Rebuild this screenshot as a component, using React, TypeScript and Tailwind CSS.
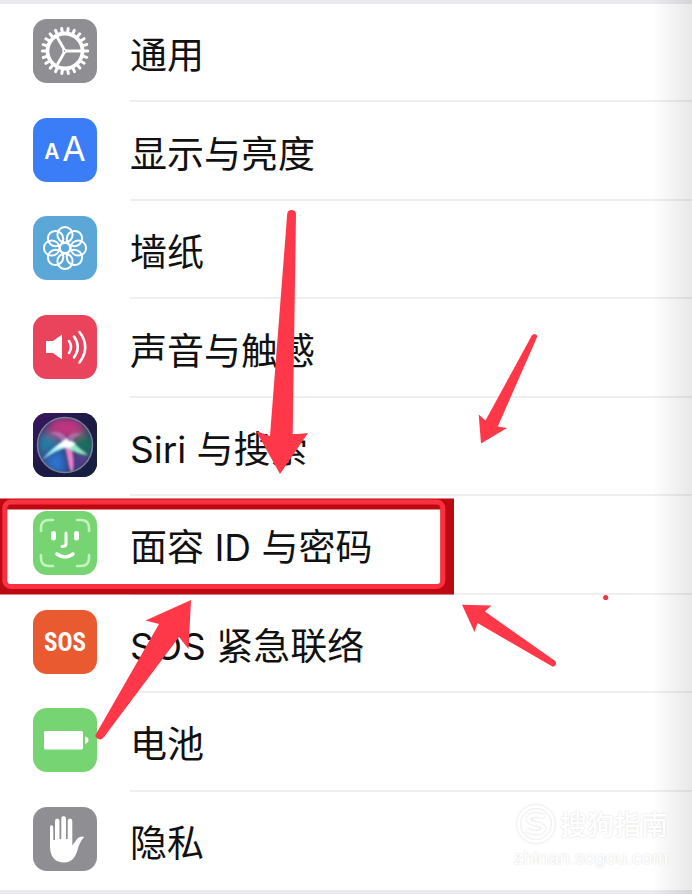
import type { ReactNode } from "react";

function Tile({ className, children }: { className: string; children: ReactNode }) {
  return (
    <span className={`block size-16 shrink-0 overflow-hidden rounded-[14px] ${className}`}>
      <svg viewBox="0 0 64 64" className="size-full" fill="none" aria-hidden="true">
        {children}
      </svg>
    </span>
  );
}

const around = (count: number) => Array.from({ length: count }, (_, i) => (i * 360) / count);

function GearIcon() {
  return (
    <Tile className="bg-[#8e8e93]">
      <g stroke="#fff">
        {around(22).map((a) => (
          <path key={a} d="M32 14V9.3" strokeWidth="3" strokeLinecap="round" transform={`rotate(${a + 8} 32 32)`} />
        ))}
        <circle cx="32" cy="32" r="17.5" strokeWidth="3.8" />
        <path d="M33 32H49M31.5 31L23.5 17M31.5 33L23.5 47" strokeWidth="2.8" />
        <circle cx="31.5" cy="32" r="1.6" strokeWidth="1.5" />
      </g>
    </Tile>
  );
}

function DisplayIcon() {
  return (
    <Tile className="bg-[#3a7df6]">
      <g fill="#fff" textAnchor="middle" className="font-[Inter,sans-serif]">
        <text x="19" y="41" className="text-[21px] font-semibold">
          A
        </text>
        <text x="41" y="43" className="text-[34px]">
          A
        </text>
      </g>
    </Tile>
  );
}

function WallpaperIcon() {
  return (
    <Tile className="bg-[#5ba8d8]">
      <g stroke="#fff" strokeWidth="2">
        {around(8).map((a) => (
          <ellipse key={a} cx="32" cy="18.7" rx="7.6" ry="7.8" transform={`rotate(${a} 32 32)`} />
        ))}
        <circle cx="32" cy="32" r="5" strokeWidth="1.8" />
      </g>
    </Tile>
  );
}

function SoundIcon() {
  return (
    <Tile className="bg-[#e9445c]">
      <path d="M13 26H20L29 19.5V44.5L20 38H13Z" fill="#fff" />
      <g stroke="#fff" strokeWidth="2.6" strokeLinecap="round">
        <path d="M36 26Q40 32 36 38" />
        <path d="M41 21.5Q48.5 32 41 42.5" />
        <path d="M46.5 17Q58 32 46.5 47.5" />
      </g>
    </Tile>
  );
}

function SiriIcon() {
  return (
    <Tile className="bg-[#1c1b3a]">
      <defs>
        <linearGradient id="siri-bg" x1="0" y1="0" x2="1" y2="1">
          <stop offset="0" stopColor="#3a1560" />
          <stop offset="0.5" stopColor="#1c1b45" />
          <stop offset="1" stopColor="#14203f" />
        </linearGradient>
        <clipPath id="siri-orb">
          <circle cx="32" cy="32" r="27" />
        </clipPath>
        <filter id="siri-soft" x="-50%" y="-50%" width="200%" height="200%">
          <feGaussianBlur stdDeviation="4" />
        </filter>
        <filter id="siri-glow" x="-50%" y="-50%" width="200%" height="200%">
          <feGaussianBlur stdDeviation="0.9" />
        </filter>
      </defs>
      <rect width="64" height="64" fill="url(#siri-bg)" />
      <g clipPath="url(#siri-orb)">
        <circle cx="32" cy="32" r="27" fill="#34386c" />
        <g filter="url(#siri-soft)">
          <path d="M12 18L22 4L46 6L52 18L34 27Z" fill="#c0357f" />
          <path d="M36 29L52 17L64 34L54 44Z" fill="#13705f" />
          <path d="M4 24L14 20L30 30L6 44Z" fill="#287fa6" />
          <path d="M8 48L30 34L34 60L20 60Z" fill="#2a74cf" />
          <path d="M40 38L56 46L44 60Z" fill="#5d3b9a" />
        </g>
        <g filter="url(#siri-glow)">
          <path d="M17 20Q31 16 35 29L30 33Q29 23 17 20Z" fill="#d79ae0" opacity=".5" />
          <path d="M49 21Q35 17 33 29L39 31Q40 23 49 21Z" fill="#c79ae0" opacity=".45" />
          <path d="M9 47Q20 34 31 27L38 29L36 34Q22 37 9 47Z" fill="#a4f1f6" />
          <path d="M31 30L37 30Q42 44 40 60Q37 60 35 48T31 33Z" fill="#ef80c8" />
          <path d="M33 28L39 28Q47 36 55 42Q43 41 33 34Z" fill="#8fe9c6" />
          <path d="M22 35L31 28L33 25L36 28L43 30L37 35L28 34Z" fill="#fff" />
        </g>
      </g>
      <circle cx="32" cy="32" r="27.5" stroke="#8c96aa" strokeWidth="1.6" opacity=".8" />
    </Tile>
  );
}

function FaceIcon() {
  return (
    <Tile className="bg-[#76d572]">
      <g stroke="#fff" strokeLinecap="round">
        <path
          d="M8 20V17Q8 9 16 9H20M44 9H48Q56 9 56 17V20M56 44V47Q56 55 48 55H44M20 55H16Q8 55 8 47V44"
          stroke="#c5f3bd"
          strokeWidth="2.6"
        />
        <path d="M20.5 22.5V27M43.5 22.5V27" strokeWidth="5" />
        <path d="M33 22V32.5Q33 35.5 29 35.5" strokeWidth="3" />
        <path d="M24 43Q32 49 40 43" strokeWidth="3.6" />
      </g>
    </Tile>
  );
}

function SosIcon() {
  return (
    <Tile className="bg-[#ea5a31]">
      <text
        x="32"
        y="41"
        textAnchor="middle"
        fill="#fff"
        className="font-['Roboto_Condensed',Roboto,sans-serif] text-[25px] font-bold"
      >
        SOS
      </text>
    </Tile>
  );
}

function BatteryIcon() {
  return (
    <Tile className="bg-[#76d572]">
      <rect x="11" y="23" width="39" height="18.5" rx="1.5" fill="#fff" />
      <path d="M52 28.5Q55.5 29.5 55.5 32T52 36Z" fill="#fff" />
    </Tile>
  );
}

function HandIcon() {
  return (
    <Tile className="bg-[#8e8e93]">
      <path
        d="M17 20.5Q17 18 18.5 18T20.3 20.5V33H22V14Q22 11.5 24.3 11.5T26.5 14V32H28.3V11.5Q28.3 9 30.6 9T33 11.5V32H34.7V14Q34.7 11.5 37 11.5T39.3 14V38.5L44.5 31.5Q47.5 28.5 51.3 30Q48 33 45.3 40Q42 55.5 31.5 55.5Q17 55.5 17 39Z"
        fill="#fff"
      />
    </Tile>
  );
}

const items = [
  { label: "通用", icon: <GearIcon /> },
  { label: "显示与亮度", icon: <DisplayIcon /> },
  { label: "墙纸", icon: <WallpaperIcon /> },
  { label: "声音与触感", icon: <SoundIcon /> },
  { label: "Siri 与搜索", icon: <SiriIcon /> },
  { label: "面容 ID 与密码", icon: <FaceIcon /> },
  { label: "SOS 紧急联络", icon: <SosIcon /> },
  { label: "电池", icon: <BatteryIcon /> },
  { label: "隐私", icon: <HandIcon /> },
];

// Hand-drawn marks that float over the list
function Annotations() {
  return (
    <svg
      viewBox="0 0 692 894"
      className="pointer-events-none absolute top-0 left-0 h-[894px] w-[692px]"
      fill="none"
      aria-hidden="true"
    >
      <path d="M0 498.5H454V594.5H0ZM6 509.5V584H440.5V509.5Z" fill="#bd0912" fillRule="evenodd" />
      <rect x="4.8" y="502" width="438" height="84.5" rx="6" stroke="#fb3041" strokeWidth="5" />
      <g fill="#fe3848">
        <path d="M287.2 214Q287.5 210 291.5 210T296 214L292.7 434.5L308 433L280 474L256 431L270 436Z" />
        <path d="M531.8 335.5Q534 333 536 334.5T536.7 338L497.8 426.5L507 428L481 443.5L478.7 414.5L485.5 420.5Z" />
        <path d="M462 604.8L491.5 605.5L485 611.5L554.5 660.5Q557 662.5 555.5 665T551.5 666L477.5 623L474.5 632Z" />
        <path d="M96 734L159 624L145.5 620.5L191 600L188.5 649L179 637L104 737Q101 741 97.5 738.5T96 734Z" />
      </g>
      <circle cx="605.7" cy="597.5" r="2.6" fill="#e8394a" />
    </svg>
  );
}

function Watermark() {
  return (
    <div className="pointer-events-none absolute right-6 bottom-6 flex flex-col items-end text-white [text-shadow:0_0_2px_#d4d4d4]">
      <div className="flex items-center gap-1">
        <svg viewBox="0 0 40 40" className="size-10 drop-shadow-[0_0_1px_#d4d4d4]" fill="none" stroke="#fff" aria-hidden="true">
          <circle cx="20" cy="20" r="17.5" strokeWidth="3" />
          <path d="M28 13Q20 9 14 12.5Q10 17 18 19.5Q29 21 27 26Q22 31 11 26.5" strokeWidth="3.5" />
        </svg>
        <span className="pt-1 text-[27px] leading-10 font-medium">搜狗指南</span>
      </div>
      <span className="font-['Liberation_Sans',sans-serif] text-[19px] leading-6">zhinan.sogou.com</span>
    </div>
  );
}

export default function App() {
  return (
    <main className="relative min-h-screen overflow-hidden bg-white font-[Inter,'Noto_Sans_CJK_SC',sans-serif] text-[#111]">
      <ul className="grid min-h-screen auto-rows-fr border-t-4 border-b-4 border-[#e9e9ee]">
        {items.map(({ label, icon }, i) => (
          <li key={label}>
            <a href="#" className="flex h-full items-stretch gap-[33px] pl-[33px]">
              <span className="flex items-center pb-1">{icon}</span>
              <span
                className={`flex flex-1 items-center border-b-2 pt-2 text-[37px] leading-[48px] ${
                  i === items.length - 1 ? "border-transparent" : "border-[#efeff0]"
                }`}
              >
                {label}
              </span>
            </a>
          </li>
        ))}
      </ul>
      <div className="pointer-events-none absolute inset-y-0 right-0 w-10 bg-linear-to-r from-transparent to-black/9" />
      <Watermark />
      <Annotations />
    </main>
  );
}
